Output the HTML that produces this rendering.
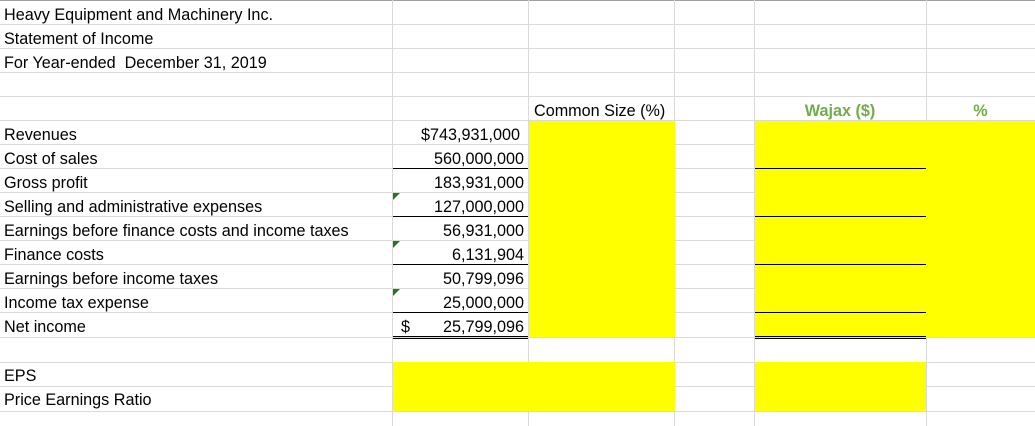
<!DOCTYPE html>
<html><head><style>
body{margin:0;width:1035px;height:426px;overflow:hidden;background:#fff;font-family:"Liberation Sans",Arial,sans-serif;font-size:16.2px;color:#000;position:relative}
.a{position:absolute}
.h{position:absolute;left:0;width:1035px;height:1px;background:#dadada}
.v{position:absolute;top:0;height:426px;width:1px;background:#dadada}
.y{position:absolute;background:#ffff00}
.t{position:absolute;height:24px;line-height:24px;margin-top:2px;white-space:nowrap}
.r{text-align:right}
.u{position:absolute;height:1px;background:#000}
.g{position:absolute;width:0;height:0;border-top:7px solid #1e7b1e;border-right:7px solid transparent}
</style></head><body>
<div class="h" style="top:0;background:#a0a0a0"></div>
<div class="h" style="top:24px"></div><div class="h" style="top:48px"></div><div class="h" style="top:72px"></div><div class="h" style="top:96px"></div><div class="h" style="top:120px"></div><div class="h" style="top:144px"></div><div class="h" style="top:168px"></div><div class="h" style="top:192px"></div><div class="h" style="top:216px"></div><div class="h" style="top:240px"></div><div class="h" style="top:264px"></div><div class="h" style="top:288px"></div><div class="h" style="top:312px"></div><div class="h" style="top:337px"></div><div class="h" style="top:362px"></div><div class="h" style="top:386px"></div><div class="h" style="top:411px"></div>
<div class="v" style="left:392px"></div><div class="v" style="left:528px"></div><div class="v" style="left:674px"></div><div class="v" style="left:754px"></div><div class="v" style="left:926px"></div>
<div class="y" style="left:529px;top:121px;width:146px;height:216px"></div>
<div class="y" style="left:755px;top:121px;width:280px;height:216px"></div>
<div class="y" style="left:393px;top:362px;width:282px;height:49px"></div>
<div class="y" style="left:755px;top:362px;width:171px;height:49px"></div>
<div class="t" style="left:4px;top:1px">Heavy Equipment and Machinery Inc.</div>
<div class="t" style="left:4px;top:25px">Statement of Income</div>
<div class="t" style="left:4px;top:49px">For Year-ended&nbsp; December 31, 2019</div>
<div class="t" style="left:534px;top:97px">Common Size (%)</div>
<div class="t" style="left:754px;top:97px;width:172px;text-align:center;color:#70ad47;font-weight:bold">Wajax ($)</div>
<div class="t" style="left:926px;top:97px;width:109px;text-align:center;color:#70ad47;font-weight:bold">%</div>
<div class="t" style="left:4px;top:121px">Revenues</div>
<div class="t" style="left:4px;top:145px">Cost of sales</div>
<div class="t" style="left:4px;top:169px">Gross profit</div>
<div class="t" style="left:4px;top:193px">Selling and administrative expenses</div>
<div class="t" style="left:4px;top:217px">Earnings before finance costs and income taxes</div>
<div class="t" style="left:4px;top:241px">Finance costs</div>
<div class="t" style="left:4px;top:265px">Earnings before income taxes</div>
<div class="t" style="left:4px;top:289px">Income tax expense</div>
<div class="t" style="left:4px;top:313px">Net income</div>
<div class="t" style="left:4px;top:362px">EPS</div>
<div class="t" style="left:4px;top:386px">Price Earnings Ratio</div>
<div class="t r" style="left:393px;top:121px;width:127px">$743,931,000</div>
<div class="t r" style="left:393px;top:145px;width:131px">560,000,000</div>
<div class="t r" style="left:393px;top:169px;width:131px">183,931,000</div>
<div class="t r" style="left:393px;top:193px;width:131px">127,000,000</div>
<div class="t r" style="left:393px;top:217px;width:131px">56,931,000</div>
<div class="t r" style="left:393px;top:241px;width:131px">6,131,904</div>
<div class="t r" style="left:393px;top:265px;width:131px">50,799,096</div>
<div class="t r" style="left:393px;top:289px;width:131px">25,000,000</div>
<div class="t" style="left:401px;top:313px">$</div>
<div class="t r" style="left:393px;top:313px;width:131px">25,799,096</div>
<div class="g" style="left:393px;top:193px"></div>
<div class="g" style="left:393px;top:241px"></div>
<div class="g" style="left:393px;top:289px"></div>
<div class="u" style="left:393px;top:168px;width:135px"></div>
<div class="u" style="left:393px;top:216px;width:135px"></div>
<div class="u" style="left:393px;top:264px;width:135px"></div>
<div class="u" style="left:393px;top:312px;width:135px"></div>
<div class="u" style="left:393px;top:336px;width:135px"></div>
<div class="u" style="left:393px;top:338px;width:135px"></div>
<div class="u" style="left:755px;top:168px;width:171px"></div>
<div class="u" style="left:755px;top:216px;width:171px"></div>
<div class="u" style="left:755px;top:264px;width:171px"></div>
<div class="u" style="left:755px;top:312px;width:171px"></div>
<div class="u" style="left:755px;top:336px;width:171px"></div>
<div class="u" style="left:755px;top:338px;width:171px"></div>
</body></html>
